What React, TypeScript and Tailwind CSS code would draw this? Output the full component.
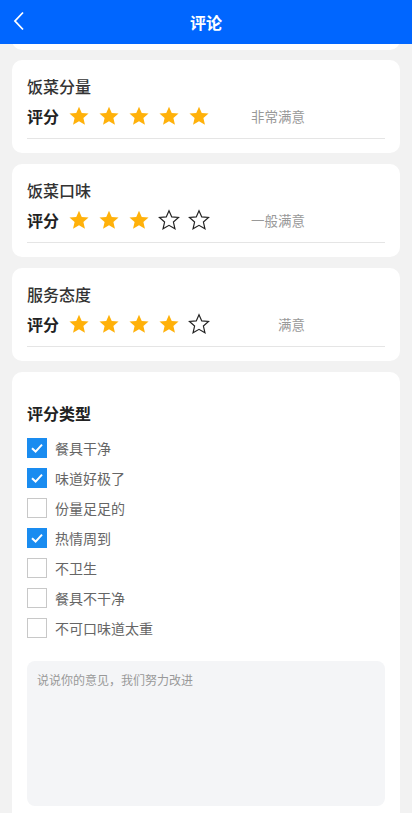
import { useState } from "react";

const FONT = { fontFamily: '"Noto Sans CJK SC", "Noto Sans", sans-serif' };

type Rating = { title: string; score: number; label: string };

const RATINGS: Rating[] = [
  { title: "饭菜分量", score: 5, label: "非常满意" },
  { title: "饭菜口味", score: 3, label: "一般满意" },
  { title: "服务态度", score: 4, label: "满意" },
];

const TAGS = [
  { label: "餐具干净", checked: true },
  { label: "味道好极了", checked: true },
  { label: "份量足足的", checked: false },
  { label: "热情周到", checked: true },
  { label: "不卫生", checked: false },
  { label: "餐具不干净", checked: false },
  { label: "不可口味道太重", checked: false },
];

function Star({ filled }: { filled: boolean }) {
  return (
    <svg width="22" height="22" viewBox="0 0 24 24" className="shrink-0">
      <polygon
        points="12,1.8 15,8.6 22.4,9.3 16.8,14.2 18.5,21.6 12,17.8 5.5,21.6 7.2,14.2 1.6,9.3 9,8.6"
        fill={filled ? "#ffb10a" : "none"}
        stroke={filled ? "none" : "#222"}
        strokeWidth="1.3"
        strokeLinejoin="miter"
      />
    </svg>
  );
}

function RatingCard({ item }: { item: Rating }) {
  return (
    <div className="rounded-[10px] bg-white px-[15px] pb-[14px] pt-[15px]">
      <div className="text-[16px] font-medium leading-[22px] text-[#333]">
        {item.title}
      </div>
      <div className="mt-[7px] flex h-[24px] items-center">
        <span className="text-[16px] font-bold text-[#222]">评分</span>
        <div className="ml-[9px] flex gap-[8px]">
          {[1, 2, 3, 4, 5].map((n) => (
            <Star key={n} filled={n <= item.score} />
          ))}
        </div>
        <span className="w-[95px] text-right text-[13.5px] text-[#999]">
          {item.label}
        </span>
      </div>
      <div className="mt-[10px] h-px bg-[#e5e5e5]" />
    </div>
  );
}

export default function App() {
  const [tags, setTags] = useState(TAGS);

  return (
    <div className="min-h-screen bg-[#f2f2f2]" style={FONT}>
      <header className="relative z-10 flex h-[44px] items-center justify-center bg-[#0066ff]">
        <svg
          width="14"
          height="20"
          viewBox="0 0 14 20"
          className="absolute left-[12px] top-[11px]"
        >
          <polyline
            points="11,1.5 3,10 11,18.5"
            fill="none"
            stroke="white"
            strokeWidth="1.8"
          />
        </svg>
        <span className="text-[16px] font-bold text-white">评论</span>
      </header>

      <div className="h-[6px] overflow-hidden px-[12px]">
        <div className="-mt-[54px] h-[60px] rounded-[10px] bg-white" />
      </div>

      <div className="flex flex-col gap-[11px] px-[12px] pt-[10px]">
        {RATINGS.map((r) => (
          <RatingCard key={r.title} item={r} />
        ))}

        <div className="rounded-t-[10px] bg-white px-[15px] pb-[30px] pt-[30px]">
          <div className="text-[16px] font-bold leading-[22px] text-[#222]">
            评分类型
          </div>
          <div className="mt-[14px] flex flex-col gap-[10px]">
            {tags.map((t, i) => (
              <button
                key={t.label}
                className="flex h-[20px] items-center gap-[8px] text-left"
                onClick={() =>
                  setTags(
                    tags.map((x, j) =>
                      j === i ? { ...x, checked: !x.checked } : x
                    )
                  )
                }
              >
                {t.checked ? (
                  <span className="flex h-[20px] w-[20px] items-center justify-center bg-[#1a8cf0]">
                    <svg width="14" height="14" viewBox="0 0 14 14">
                      <polyline
                        points="2,7.2 5.6,10.6 12,3.6"
                        fill="none"
                        stroke="white"
                        strokeWidth="2"
                      />
                    </svg>
                  </span>
                ) : (
                  <span className="h-[20px] w-[20px] border border-[#c8c8c8] bg-white" />
                )}
                <span className="text-[14px] text-[#666]">{t.label}</span>
              </button>
            ))}
          </div>
          <textarea
            placeholder="说说你的意见，我们努力改进"
            className="mt-[23px] block h-[145px] w-full resize-none rounded-[8px] bg-[#f4f5f7] px-[10px] py-[10px] text-[12px] text-[#333] outline-none placeholder:text-[#999]"
            style={FONT}
          />
        </div>
      </div>
    </div>
  );
}
